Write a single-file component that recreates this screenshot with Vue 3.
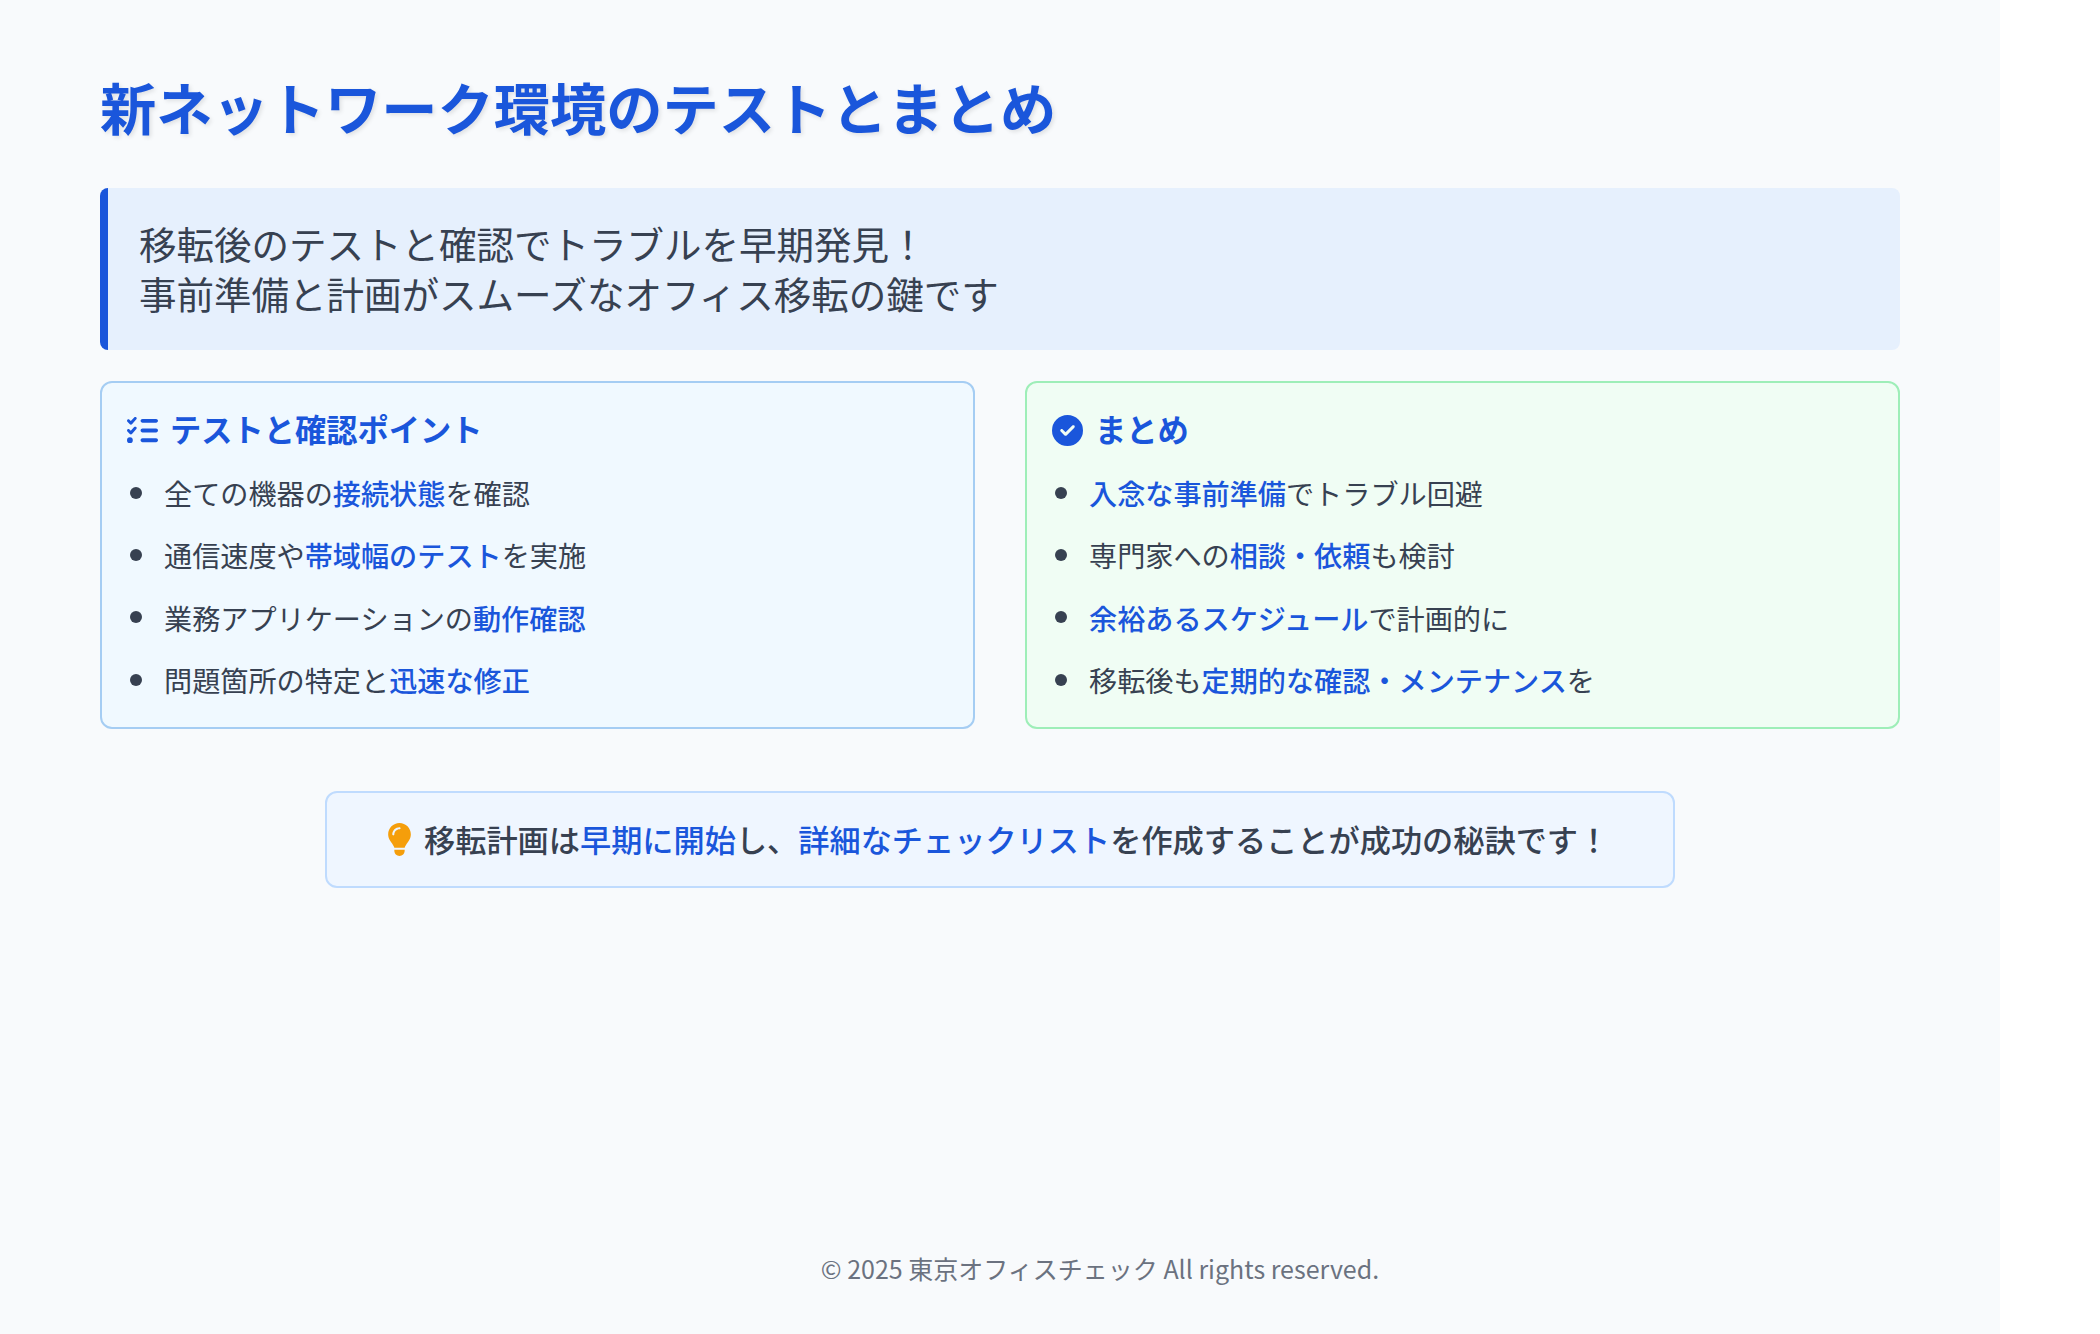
<script setup>
const left = [
  [['全ての機器の', 0], ['接続状態', 1], ['を確認', 0]],
  [['通信速度や', 0], ['帯域幅のテスト', 1], ['を実施', 0]],
  [['業務アプリケーションの', 0], ['動作確認', 1]],
  [['問題箇所の特定と', 0], ['迅速な修正', 1]],
]
const right = [
  [['入念な事前準備', 1], ['でトラブル回避', 0]],
  [['専門家への', 0], ['相談・依頼', 1], ['も検討', 0]],
  [['余裕あるスケジュール', 1], ['で計画的に', 0]],
  [['移転後も', 0], ['定期的な確認・メンテナンス', 1], ['を', 0]],
]
const cards = [
  { key: 'tests', title: 'テストと確認ポイント', items: left, cls: 'card-blue' },
  { key: 'summary', title: 'まとめ', items: right, cls: 'card-green' },
]
</script>

<template>
  <div class="page">
    <main class="slide">
      <h1 class="title">新ネットワーク環境のテストとまとめ</h1>
      <section class="lead">
        <p>移転後のテストと確認でトラブルを早期発見！</p>
        <p>事前準備と計画がスムーズなオフィス移転の鍵です</p>
      </section>
      <div class="cards">
        <section v-for="card in cards" :key="card.key" class="card" :class="card.cls">
          <h2 class="card-title">
            <svg v-if="card.key === 'tests'" class="card-icon" viewBox="0 0 512 512" aria-hidden="true">
              <path d="M152.1 38.2c9.9 8.9 10.7 24 1.8 33.9l-72 80c-4.4 4.9-10.6 7.8-17.2 7.9s-12.9-2.4-17.6-7L7 113C-2.3 103.6-2.3 88.4 7 79s24.6-9.4 33.9 0l22.1 22.1 55.1-61.2c8.9-9.9 24-10.7 33.9-1.8zm0 160c9.9 8.9 10.7 24 1.8 33.9l-72 80c-4.4 4.9-10.6 7.8-17.2 7.9s-12.9-2.4-17.6-7L7 273c-9.4-9.4-9.4-24.6 0-33.9s24.6-9.4 33.9 0l22.1 22.1 55.1-61.2c8.9-9.9 24-10.7 33.9-1.8zM224 96c0-17.7 14.3-32 32-32H480c17.7 0 32 14.3 32 32s-14.3 32-32 32H256c-17.7 0-32-14.3-32-32zm0 160c0-17.7 14.3-32 32-32H480c17.7 0 32 14.3 32 32s-14.3 32-32 32H256c-17.7 0-32-14.3-32-32zm0 160c0-17.7 14.3-32 32-32H480c17.7 0 32 14.3 32 32s-14.3 32-32 32H256c-17.7 0-32-14.3-32-32zM48 368a48 48 0 1 1 0 96 48 48 0 1 1 0-96z" />
            </svg>
            <svg v-else class="card-icon" viewBox="0 0 512 512" aria-hidden="true">
              <path d="M256 512A256 256 0 1 0 256 0a256 256 0 1 0 0 512zM369 209L241 337c-9.4 9.4-24.6 9.4-33.9 0l-64-64c-9.4-9.4-9.4-24.6 0-33.9s24.6-9.4 33.9 0l47 47L335 175c9.4-9.4 24.6-9.4 33.9 0s9.4 24.6 0 33.9z" />
            </svg>
            <span>{{ card.title }}</span>
          </h2>
          <ul class="list">
            <li v-for="(item, i) in card.items" :key="i">
              <template v-for="(part, j) in item" :key="j">
                <span v-if="part[1]" class="hl">{{ part[0] }}</span>
                <template v-else>{{ part[0] }}</template>
              </template>
            </li>
          </ul>
        </section>
      </div>
      <div class="tip">
        <svg class="bulb" viewBox="0 0 384 512" aria-hidden="true">
          <path d="M272 384c9.6-31.9 29.5-59.1 49.2-86.2c0 0 0 0 0 0c5.2-7.1 10.4-14.2 15.4-21.4c19.8-28.5 31.4-63 31.4-100.3C368 78.8 289.2 0 192 0S16 78.8 16 176c0 37.3 11.6 71.9 31.4 100.3c5 7.2 10.2 14.3 15.4 21.4c0 0 0 0 0 0c19.8 27.1 39.7 54.4 49.2 86.2H272zM192 512c44.2 0 80-35.8 80-80V416H112v16c0 44.2 35.8 80 80 80zM112 176c0 8.8-7.2 16-16 16s-16-7.2-16-16c0-61.9 50.1-112 112-112c8.8 0 16 7.2 16 16s-7.2 16-16 16c-44.2 0-80 35.8-80 80z" />
        </svg>
        <p>移転計画は<span class="hl">早期に開始</span>し、<span class="hl">詳細なチェックリスト</span>を作成することが成功の秘訣です！</p>
      </div>
      <footer class="footer">© 2025 東京オフィスチェック All rights reserved.</footer>
    </main>
  </div>
</template>

<style scoped>
.page {
  width: 2100px;
  height: 1334px;
  background: #ffffff;
  overflow: hidden;
  font-family: "Noto Sans CJK JP", "Noto Sans", sans-serif;
}
.slide {
  width: 2000px;
  height: 1334px;
  box-sizing: border-box;
  padding: 67px 100px 47px;
  background: #f8fafc;
  display: flex;
  flex-direction: column;
}
.title {
  margin: 0 0 43px;
  font-size: 56.25px;
  line-height: 78px;
  font-weight: 700;
  color: #1a56db;
  text-shadow: 2px 2px 4px rgba(0, 0, 0, 0.1);
}
.lead {
  height: 162px;
  box-sizing: border-box;
  padding: 30px 40px 32px 31px;
  border-left: 8px solid #1a56db;
  border-radius: 8px;
  background: #e6f0fd;
  color: #374151;
  font-size: 37.5px;
  line-height: 50px;
}
.lead p {
  margin: 0;
}
.cards {
  margin-top: 31px;
  display: grid;
  grid-template-columns: 875px 875px;
  column-gap: 50px;
}
.card {
  height: 348px;
  box-sizing: border-box;
  padding: 23px 25px 0;
  border: 2px solid;
  border-radius: 12px;
}
.card-blue {
  background: #f0f9ff;
  border-color: #a5cdf3;
}
.card-green {
  background: #f0fdf4;
  border-color: #9eeeb8;
}
.card-title {
  margin: 0;
  display: flex;
  align-items: center;
  gap: 12px;
  height: 46px;
  font-size: 31.25px;
  line-height: 46px;
  font-weight: 700;
  color: #1a56db;
}
.card-icon {
  width: 31px;
  height: 31px;
  margin-top: 3px;
  flex: none;
  fill: #1a56db;
}
.list {
  margin: 21px 0 0;
  padding: 0 0 0 37px;
  list-style: none;
  color: #374151;
  font-size: 28.15px;
  line-height: 40px;
}
.list li {
  margin-bottom: 22.4px;
}
.list li::before {
  content: "";
  display: inline-block;
  width: 12px;
  height: 12px;
  margin-left: -34px;
  margin-right: 22px;
  border-radius: 50%;
  background: #374151;
  vertical-align: 6.5px;
}
.hl {
  color: #1a56db;
  font-weight: 500;
}
.tip {
  align-self: center;
  margin-top: 62px;
  width: 1350px;
  height: 97px;
  box-sizing: border-box;
  padding: 0 60px;
  display: flex;
  align-items: center;
  gap: 12px;
  border: 2px solid #bfdbfe;
  border-radius: 12px;
  background: #eff6ff;
  color: #374151;
  font-size: 31.2px;
  font-weight: 500;
}
.tip p {
  margin: 0 0 2px;
  white-space: nowrap;
}
.bulb {
  width: 25px;
  height: 33px;
  flex: none;
  fill: #f59e0b;
}
.footer {
  margin-top: auto;
  width: 2000px;
  text-align: center;
  color: #6b7280;
  font-size: 25px;
  line-height: 38px;
}
</style>
